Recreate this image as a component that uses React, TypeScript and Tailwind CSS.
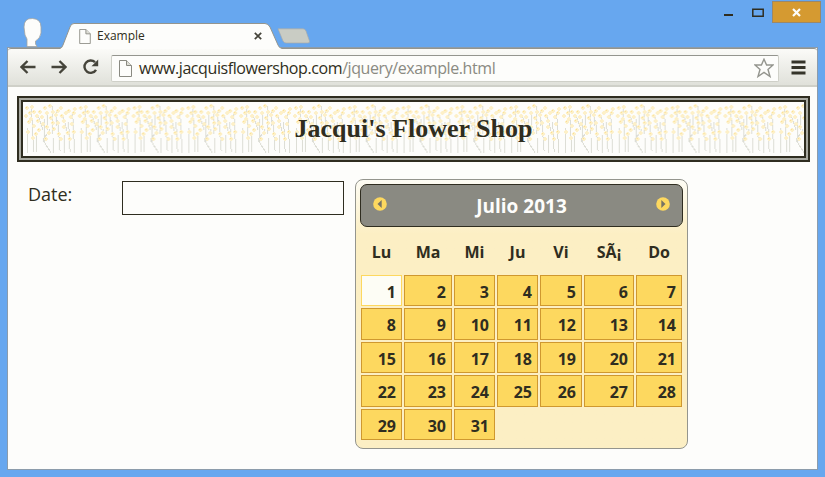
import React from "react";

const days = ["Lu", "Ma", "Mi", "Ju", "Vi", "SÃ¡", "Do"];
const dates = Array.from({ length: 31 }, (_, i) => i + 1);

const blossoms: [number, number][] = [
  [2, 4], [7, 3], [5, 9], [1, 12], [9, 8], [12, 12], [15, 8], [17, 13], [20, 4], [22, 9],
  [25, 2], [28, 8], [26, 14], [31, 11], [33, 7], [36, 4], [37, 12], [41, 9], [44, 7], [46, 13],
  [49, 9], [50, 5], [4, 18], [9, 22], [14, 26], [3, 28], [11, 30], [18, 20], [22, 23], [24, 29],
  [29, 25], [33, 19], [34, 30], [39, 23], [43, 29], [47, 20], [49, 28], [36, 35], [21, 35], [6, 15],
  [13, 17], [39, 17], [28, 19], [8, 34], [45, 35],
];

const stems =
  "M4.5 26V51M8.5 5L10.5 50M15 13L20 28M21.5 17V40M29.5 4V32M27 27L20 38L28 51M30.5 36V51M34.5 18L37 49M39.5 12L44 30M45.5 20L47 50M49.5 10L51.5 51M13.5 30V50M41.5 33V51M33.5 9V24M24.5 10V28";

function PageIcon({ className }: { className: string }) {
  return (
    <svg className={className} viewBox="0 0 13 17" fill="#fdfdfb" stroke="#8a8a82">
      <path d="M.5.5H7.5L12.5 5.5V16.5H.5Z" />
      <path d="M7.5.5V5.5H12.5" fill="#deded6" />
    </svg>
  );
}

function MonthArrow({ next = false }: { next?: boolean }) {
  return (
    <svg className="size-[14px]" viewBox="0 0 14 14">
      <circle cx="7" cy="7" r="6.8" fill="#fdd85f" />
      <path d={next ? "M5.3 3L9.5 7L5.3 11Z" : "M8.7 3L4.5 7L8.7 11Z"} fill="#777365" />
    </svg>
  );
}

function TitleBar() {
  return (
    <div className="flex h-[48px] items-end">
      <svg className="mb-px ml-[23px] h-[29px] w-[20px] shrink-0" viewBox="0 0 20 29">
        <path d="M4 28.5V21L2 17L1 9Q1 0 9.5.5Q18 1 18 9V15Q17 21 12.5 23V26L14 28.5Z" fill="#fdfdfb" stroke="#a4a59f" strokeWidth=".8" />
      </svg>
      <div className="relative ml-[17px] h-[26px] w-[222px] shrink-0">
        <svg className="absolute inset-0 h-[27px] w-[222px]" viewBox="0 0 222 27">
          <path d="M0 26.5Q2 26 3 23L10 5Q11 1.5 14 1.5H205Q208 1.5 210 5L218 23Q219 26 222 26.5V27H0Z" fill="#fdfdfb" />
          <path d="M0 26.5Q2 26 3 23L10 5Q11 1.5 14 1.5H205Q208 1.5 210 5L218 23Q219 26 222 26.5" fill="none" stroke="#94958e" />
        </svg>
        <div className="relative flex h-full items-center pl-[19px] pt-[2px]">
          <PageIcon className="h-[15px] w-[12px]" />
          <span className="ml-[6px] text-[12px] leading-none">Example</span>
          <svg className="ml-auto mr-[20px] size-[8px]" viewBox="0 0 8 8" stroke="#45443a" strokeWidth="1.7">
            <path d="M.8.8L7.2 7.2M7.2.8L.8 7.2" />
          </svg>
        </div>
      </div>
      <svg className="mb-[4px] -ml-[5px] h-[16px] w-[34px] shrink-0" viewBox="0 0 34 16">
        <path d="M1 .8H26Q28 .8 29 3L32.5 13Q33 15 31 15H9Q7 15 6 13Z" fill="#c9ccc4" stroke="#a6abab" strokeWidth=".7" />
      </svg>
      <div className="ml-auto mr-[4px] flex h-full items-start">
        <svg className="mt-[14px] h-[3px] w-[9px]" viewBox="0 0 9 3"><path d="M0 1H9" stroke="#2f2d20" strokeWidth="2" /></svg>
        <svg className="ml-[19px] mt-[8px] h-[9px] w-[12px]" viewBox="0 0 12 9"><path d="M.8 1.2H11.2V8.2H.8Z" fill="none" stroke="#2f2d20" strokeWidth="1.5" /></svg>
        <div className="ml-[8px] mt-px flex h-[22px] w-[49px] items-center justify-center border border-[#9b8869] bg-[#d59a31]">
          <svg className="size-[9px]" viewBox="0 0 9 9" stroke="#fdfdfb" strokeWidth="2.2"><path d="M1 1L8 8M8 1L1 8" /></svg>
        </div>
      </div>
    </div>
  );
}

function Toolbar() {
  return (
    <div className="flex h-[39px] shrink-0 items-center rounded-t-[3px] border-b-2 border-t border-b-[#cfd0c8] border-t-[#94958e] bg-linear-to-b from-[#fbfbf8] to-[#e0e1da]">
      <svg className="ml-[12px] h-[14px] w-[16px]" viewBox="0 0 16 14" fill="none" stroke="#45443a" strokeWidth="2.3">
        <path d="M15.5 7H2M7.5 1L1.5 7L7.5 13" />
      </svg>
      <svg className="ml-[15px] h-[14px] w-[16px]" viewBox="0 0 16 14" fill="none" stroke="#45443a" strokeWidth="2.3">
        <path d="M.5 7H14M8.5 1L14.5 7L8.5 13" />
      </svg>
      <svg className="ml-[15px] h-[16px] w-[17px]" viewBox="0 0 17 16">
        <path d="M13 3.2A6.2 6.2 0 1 0 14 10.8" fill="none" stroke="#45443a" strokeWidth="2.4" />
        <path d="M9.5 7.2H16.2V.5Z" fill="#45443a" />
      </svg>
      <div className="ml-[12px] mt-[2px] flex h-[27px] w-[668px] items-center rounded-[2px] border border-[#cfd0c8] border-t-[#94958e] bg-[#fdfdfb] pl-[7px] pr-[4px]">
        <PageIcon className="h-[17px] w-[13px]" />
        <span className="ml-[7px] whitespace-nowrap text-[16px] leading-none tracking-[-0.41px]">
          www.jacquisflowershop.com<span className="text-[#8a8a82]">/jquery/example.html</span>
        </span>
        <svg className="ml-auto size-[20px]" viewBox="0 0 20 20" fill="#fdfdfb" stroke="#94958e" strokeWidth="1.4">
          <path d="M10 1.2L12.6 7H19L14 11.5L16 18.5L10 14.4L4 18.5L6 11.5L1 7H7.4Z" />
        </svg>
      </div>
      <svg className="ml-[12px] h-[15px] w-[15px]" viewBox="0 0 15 15" stroke="#35342a" strokeWidth="3">
        <path d="M.5 2H14.5M.5 7.5H14.5M.5 13H14.5" />
      </svg>
    </div>
  );
}

function Banner() {
  return (
    <header className="ml-[9px] mt-[9px] h-[66px] w-[793px] border-2 border-[#2f2d20]">
      <div className="h-full border-2 border-[#a9aaa2]">
        <div className="relative flex h-full items-center justify-center border-2 border-[#2f2d20]">
          <svg className="absolute inset-0 h-full w-full" shapeRendering="crispEdges">
            <defs>
              <pattern id="flowers" width="53.8" height="54" patternUnits="userSpaceOnUse">
                <path d={stems} fill="none" stroke="#dcddd5" strokeWidth="1" />
                {blossoms.map(([x, y], i) => (
                  <g key={i}>
                    <path d={`M${x} ${y + 1}h4v2h-4zM${x + 1} ${y}h2v4h-2z`} fill="#fdf0c8" />
                    {i % 2 === 0 && <rect x={x + 1} y={y + 1} width="1" height="1" fill="#fbdf8e" />}
                  </g>
                ))}
              </pattern>
            </defs>
            <rect width="100%" height="100%" fill="url(#flowers)" />
          </svg>
          <h1 className="relative font-['Liberation_Serif',serif] text-[26px] font-bold leading-none">Jacqui's Flower Shop</h1>
        </div>
      </div>
    </header>
  );
}

function Calendar() {
  return (
    <section className="ml-[11px] h-[270px] w-[333px] rounded-[8px] border border-[#94958e] bg-linear-to-b from-[#fdfcf4] via-[#fcefc4] via-20% to-[#fcefc4] px-[4px] pt-[4px] font-bold">
      <div className="flex h-[43px] items-start justify-between rounded-[7px] border border-[#2f2d20] bg-[#8a8a82] px-[12px]">
        <div className="mt-[12px]"><MonthArrow /></div>
        <h2 className="mt-[9px] text-[19px] leading-[24px] text-[#fdfdfb]">Julio 2013</h2>
        <div className="mt-[12px]"><MonthArrow next /></div>
      </div>
      <div className="ml-px grid h-[48px] grid-cols-[41px_48px_41px_41px_42px_50px_46px] gap-x-[2px] text-center text-[16px] leading-[50px]">
        {days.map((day) => <span key={day}>{day}</span>)}
      </div>
      <div className="ml-px grid grid-cols-[41px_48px_41px_41px_42px_50px_46px] grid-rows-[31px_32px_31px_32px_31px] gap-[2px] text-right text-[16px]">
        {dates.map((date) => (
          <span
            key={date}
            className={
              date === 1
                ? "border border-[#fdd85f] bg-[#fdfdf5] pr-[5px] leading-[32px]"
                : "border border-[#cf982f] bg-[#fdd85f] pr-[5px] leading-[32px]"
            }
          >
            {date}
          </span>
        ))}
      </div>
    </section>
  );
}

export default function App() {
  return (
    <div className="flex h-[477px] w-[825px] flex-col overflow-hidden bg-[#67a7ef] font-['Open_Sans','Noto_Sans',sans-serif] text-[#2f2d20]">
      <TitleBar />
      <main className="mx-[8px] flex h-[421px] w-[809px] flex-col bg-[#fdfdfb] outline outline-[#8c9cab]">
        <Toolbar />
        <Banner />
        <div className="mt-[17px] flex items-start pl-[20px]">
          <label htmlFor="date" className="w-[94px] pt-[3px] text-[18px] leading-[24px]">Date:</label>
          <input id="date" className="mt-[2px] h-[34px] w-[222px] border border-[#2f2d20] bg-[#fdfdfb]" />
          <Calendar />
        </div>
      </main>
    </div>
  );
}
